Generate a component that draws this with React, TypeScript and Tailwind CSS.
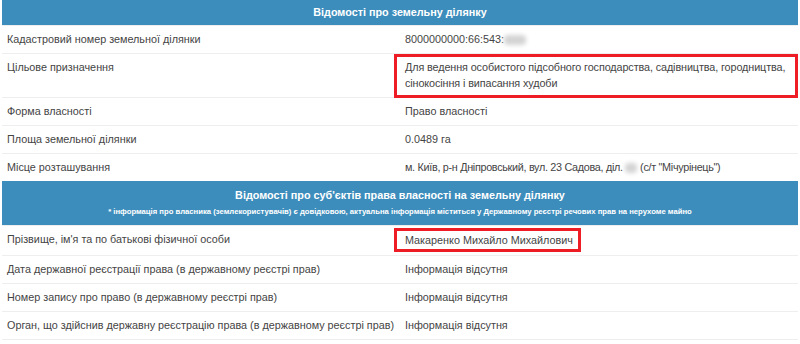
const rowsTop = [
  { label: 'Кадастровий номер земельної ділянки', kind: 'cad' },
  { label: 'Цільове призначення', kind: 'purpose' },
  { label: 'Форма власності', value: 'Право власності' },
  { label: 'Площа земельної ділянки', value: '0.0489 га' },
  { label: 'Місце розташування', kind: 'place' },
];

const rowsBottom = [
  { label: 'Прізвище, ім\'я та по батькові фізичної особи', kind: 'name' },
  { label: 'Дата державної реєстрації права (в державному реєстрі прав)', value: 'Інформація відсутня' },
  { label: 'Номер запису про право (в державному реєстрі прав)', value: 'Інформація відсутня' },
  { label: 'Орган, що здійснив державну реєстрацію права (в державному реєстрі прав)', value: 'Інформація відсутня' },
];

const Blur = ({ w }: { w: string }) => (
  <span className={`inline-block ${w} h-[10px] align-middle bg-[#d4d4d4] blur-[2px] rounded-sm`} />
);

type Row = { label: string; value?: string; kind?: string };

const renderValue = (row: Row) => {
  if (row.kind === 'cad') {
    return (
      <span>
        8000000000:66:543:<Blur w="w-[22px]" />
      </span>
    );
  }
  if (row.kind === 'place') {
    return (
      <span className="tracking-[-0.3px]">
        м. Київ, р-н Дніпровський, вул. 23 Садова, діл. <Blur w="w-[12px]" /> (с/т "Мічурінець")
      </span>
    );
  }
  if (row.kind === 'purpose') {
    return (
      <span className="tracking-[-0.1px]">
        Для ведення особистого підсобного господарства, садівництва, городництва,
        <br />
        сінокосіння і випасання худоби
      </span>
    );
  }
  if (row.kind === 'name') {
    return (
      <span className="inline-block -ml-[11px] -my-[3px] border-[3px] border-[#ee1c25] pl-[8px] pr-[5px] py-[1px]">
        Макаренко Михайло Михайлович
      </span>
    );
  }
  return <span>{row.value}</span>;
};

const TableRow = ({ row }: { row: Row }) => (
  <div className="grid grid-cols-[398px_1fr] border-t border-[#eeeeee]">
    <div className="px-[5px] pt-[5px] pb-[6px] leading-[16px]">{row.label}</div>
    <div className="relative pl-[5px] pr-[2px] pt-[5px] pb-[6px] leading-[16px] whitespace-nowrap">
      {row.kind === 'purpose' && (
        <div className="absolute left-[-6px] right-0 top-0 bottom-[-1px] border-[3px] border-[#ee1c25]" />
      )}
      {renderValue(row)}
    </div>
  </div>
);

export default function App() {
  return (
    <div
      className="w-[800px] h-[344px] bg-white px-[2px] overflow-hidden text-[10.8px] text-[#444]"
      style={{ fontFamily: '"Liberation Sans", Arial, sans-serif' }}
    >
      <div className="bg-[#3c8dbc] text-white font-bold text-center h-[25px] leading-[24px] text-[10.8px]">
        Відомості про земельну ділянку
      </div>
      {rowsTop.map((r) => (
        <TableRow key={r.label} row={r} />
      ))}
      <div className="bg-[#3c8dbc] text-white font-bold text-center h-[44px] pt-[6px]">
        <div className="text-[10.8px] leading-[16px]">Відомості про суб'єктів права власності на земельну ділянку</div>
        <div className="text-[7.7px] leading-[14px] mt-[2px]">
          * інформація про власника (землекористувачів) є довідковою, актуальна інформація міститься у Державному реєстрі речових прав на нерухоме майно
        </div>
      </div>
      {rowsBottom.map((r) => (
        <TableRow key={r.label} row={r} />
      ))}
      <div className="border-t border-[#eeeeee]" />
    </div>
  );
}
